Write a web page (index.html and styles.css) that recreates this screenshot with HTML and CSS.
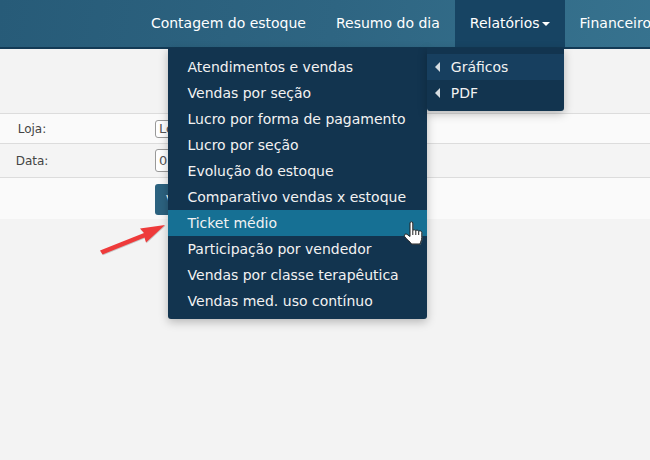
FILE: index.html
```html
<!DOCTYPE html>
<html lang="pt">
<head>
<meta charset="utf-8">
<title>Relatórios</title>
<link rel="stylesheet" href="styles.css">
</head>
<body>
<nav class="navbar">
  <a class="nav-link">Contagem do estoque</a>
  <a class="nav-link">Resumo do dia</a>
  <div class="nav-item">
    <a class="nav-link active">Relatórios<span class="caret"></span></a>
    <ul class="menu menu-main">
      <li>Atendimentos e vendas</li>
      <li>Vendas por seção</li>
      <li>Lucro por forma de pagamento</li>
      <li>Lucro por seção</li>
      <li>Evolução do estoque</li>
      <li>Comparativo vendas x estoque</li>
      <li class="current">Ticket médio</li>
      <li>Participação por vendedor</li>
      <li>Vendas por classe terapêutica</li>
      <li>Vendas med. uso contínuo</li>
    </ul>
    <ul class="menu menu-sub">
      <li class="open"><span class="arrow"></span>Gráficos</li>
      <li><span class="arrow"></span>PDF</li>
    </ul>
  </div>
  <a class="nav-link">Financeiro</a>
</nav>
<main class="content">
  <div class="row row-loja">
    <label class="field-label">Loja:</label>
    <div class="field"><input class="input input-loja" value="Loja"></div>
  </div>
  <div class="row row-data">
    <label class="field-label">Data:</label>
    <div class="field"><input class="input input-data" value="01/01/2020"></div>
  </div>
  <div class="row row-actions">
    <div class="field-label"></div>
    <div class="field"><button class="btn">Ver</button></div>
  </div>
</main>
<svg class="pointer-arrow" width="72" height="36" viewBox="0 0 72 36">
  <path d="M2 28.500 L46 11 L42 6.500 L67 3 L48 20.500 L46.500 15.500 L4.500 32.500 Z" fill="#999" opacity=".5" transform="translate(.6 .8)"/>
  <path d="M2 28.500 L46 11 L42 6.500 L67 3 L48 20.500 L46.500 15.500 L4.500 32.500 Z" fill="#ee3a3a"/>
</svg>
<svg class="hand" width="22" height="26" viewBox="0 0 22 26">
  <path d="M7 2 C7 .4 9.800 .4 9.800 2 V9.500 C10.500 8.600 12.300 8.600 12.800 9.700 C13.500 8.800 15.300 9 15.700 10.300 C16.500 9.500 18.800 9.800 18.800 11.500 V16.500 C18.800 19.500 17.500 20.800 17 23 H8.500 C7.500 20.800 2.800 18 1.500 15.300 C.8 13.700 2.500 12.300 4 13.300 L7 15.500 Z" fill="#8a8a8a" opacity=".45" transform="translate(.8 .8)"/>
  <path d="M7 2 C7 .4 9.800 .4 9.800 2 V9.500 C10.500 8.600 12.300 8.600 12.800 9.700 C13.500 8.800 15.300 9 15.700 10.300 C16.500 9.500 18.800 9.800 18.800 11.500 V16.500 C18.800 19.500 17.500 20.800 17 23 H8.500 C7.500 20.800 2.800 18 1.500 15.300 C.8 13.700 2.500 12.300 4 13.300 L7 15.500 Z" fill="#fff" stroke="#222" stroke-width="1"/>
  <path d="M9.800 9.500 V14 M12.800 9.700 V14 M15.700 10.300 V14" stroke="#222" stroke-width="1" fill="none"/>
</svg>
</body>
</html>
```
FILE: styles.css
```css
* { box-sizing: border-box; }
html, body { margin: 0; height: 100%; overflow: hidden; }
body {
  position: relative;
  background: #f3f3f3;
  font-family: "DejaVu Sans", sans-serif;
  font-size: 14px;
  color: #555;
}
.navbar {
  display: flex;
  justify-content: flex-end;
  height: 49px;
  margin-right: -16px;
  background: linear-gradient(100deg, #275b78 0%, #2e6582 50%, #37738f 100%);
  border-bottom: 2px solid #133a55;
}
.nav-item { position: relative; display: flex; }
.nav-link {
  display: block;
  height: 47px;
  padding: 0 15px;
  line-height: 47px;
  color: #fff;
  white-space: nowrap;
}
.nav-link.active { background: #174463; }
.caret {
  display: inline-block;
  margin-left: 2px;
  vertical-align: 2px;
  border-top: 4px solid #fff;
  border-left: 4px solid transparent;
  border-right: 4px solid transparent;
}
.menu {
  position: absolute;
  top: 48px;
  margin: 0;
  padding: 6px 0 5px;
  list-style: none;
  background: #12344f;
  color: #f2f2f2;
  border-radius: 0 0 3px 3px;
  box-shadow: 0 3px 10px rgba(0,0,0,.25);
}
.menu li { height: 26px; line-height: 26px; padding: 0 20px; white-space: nowrap; }
.menu-main { right: 138px; width: 259px; height: 271px; }
.menu-sub { left: -28px; width: 137px; height: 63px; }
.menu-sub li { display: flex; align-items: center; padding: 0 8px; }
.menu li.current { background: #167094; }
.menu li.open { background: #173f5f; }
.arrow {
  width: 0;
  margin-right: 11px;
  border-right: 5px solid #d6dde2;
  border-top: 5px solid transparent;
  border-bottom: 5px solid transparent;
}
.content { display: flex; flex-direction: column; padding-top: 64px; }
.row { display: flex; align-items: center; border-top: 1px solid #dcdcdc; }
.row-loja { height: 30px; background: #fafafa; }
.row-data { height: 34px; background: #f4f4f4; }
.row-actions { height: 42px; background: #fafafa; padding-top: 1px; }
.field-label { width: 155px; padding-right: 91px; text-align: center; font-size: 12px; color: #444; }
.field { flex: 1; }
.input {
  display: block;
  width: 120px;
  font: 13px "DejaVu Sans", sans-serif;
  color: #555;
  background: #fff;
  border: 1px solid #999;
  border-radius: 3px;
  padding: 0 3px;
}
.input-loja { height: 18px; }
.input-data { height: 23px; }
.btn {
  display: block;
  width: 70px;
  height: 31px;
  padding: 0 0 0 11px;
  text-align: left;
  border: 0;
  border-radius: 3px;
  background: #2c627f;
  color: #fff;
  font: 13px "DejaVu Sans", sans-serif;
}
.pointer-arrow { position: absolute; left: 98px; top: 222px; }
.hand { position: absolute; left: 403px; top: 221px; }
```
